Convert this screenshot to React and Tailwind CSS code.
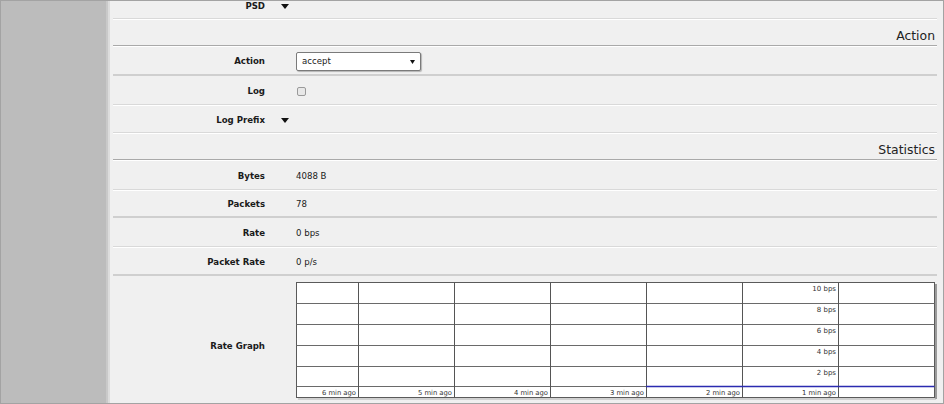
import React from "react";

const font = { fontFamily: '"DejaVu Sans", Verdana, sans-serif' };

const Caret = () => (
  <svg width="8" height="5" viewBox="0 0 8 5" className="block">
    <path d="M0 0 L8 0 L4 5 Z" fill="#111" />
  </svg>
);

const sepClass = {
  light: "border-b border-[#d9d9d9] shadow-[0_1px_0_#ffffff]",
  dark: "border-b border-[#a9a9a9] shadow-[0_1px_0_#ffffff]",
  thick: "border-b-2 border-[#cfcfcf]",
};

const Row = ({ label, sep = "light", h, children }) => (
  <div className={`mr-[2px] flex items-center pt-[3px] ${h} ${sepClass[sep]}`}>
    <div className="w-[153px] shrink-0 pr-[1px] text-right text-[8.6px] font-bold text-[#1a1a1a]">
      {label}
    </div>
    <div className="ml-[30px] flex items-center text-[8.6px] text-[#1a1a1a]">
      {children}
    </div>
  </div>
);

const Section = ({ title }) => (
  <div className={`mr-[2px] flex h-[27px] items-end justify-end pb-[3px] pr-[2px] ${sepClass.dark}`}>
    <span className="text-[12.4px] leading-none text-[#222]">{title}</span>
  </div>
);

const RateGraph = () => {
  const vx = [62, 158, 254, 350, 446, 542];
  const hy = [21, 42, 63, 84, 104];
  const yLabels = ["10 bps", "8 bps", "6 bps", "4 bps", "2 bps"];
  const xLabels = ["6 min ago", "5 min ago", "4 min ago", "3 min ago", "2 min ago", "1 min ago"];
  return (
    <svg width="642" height="118" viewBox="0 0 642 118" className="block" style={font}>
      <rect x="0.5" y="0.5" width="638" height="115" fill="#fff" stroke="#5a5a5a" />
      <line x1="640" y1="2" x2="640" y2="117" stroke="#9a9a9a" strokeWidth="2" />
      <line x1="2" y1="117" x2="640" y2="117" stroke="#b0b0b0" strokeWidth="1" />
      {hy.map((y) => (
        <line key={y} x1="0.5" y1={y + 0.5} x2="638.5" y2={y + 0.5} stroke="#6a6a6a" />
      ))}
      {vx.map((x) => (
        <line key={x} x1={x + 0.5} y1="0.5" x2={x + 0.5} y2="115.5" stroke="#555" />
      ))}
      <line x1="350" y1="104.5" x2="638.5" y2="104.5" stroke="#2b2bb0" strokeWidth="1.3" />
      {yLabels.map((t, i) => (
        <text key={t} x="540" y={9 + i * 21} textAnchor="end" fontSize="7" fill="#333">
          {t}
        </text>
      ))}
      {xLabels.map((t, i) => (
        <text key={t} x={vx[i] - 2} y="113" textAnchor="end" fontSize="6.8" fill="#333">
          {t}
        </text>
      ))}
    </svg>
  );
};

export default function App() {
  return (
    <div
      className="flex h-[404px] w-[944px] overflow-hidden border border-[#a3a3a3] bg-[#f0f0f0]"
      style={font}
    >
      <div className="w-[105px] shrink-0 bg-[#bcbcbc]" />
      <div className="w-[2px] shrink-0 bg-[#c9c9c9]" />
      <div className="w-[2px] shrink-0 bg-[#dcdcdc]" />
      <div className="min-w-0 flex-1 pl-[3px] pr-[4px]">
        <div className="mt-[-10px] flex flex-col">
          <Row label="PSD" sep="light" h="h-[28px]">
            <span className="ml-[-15px]">
              <Caret />
            </span>
          </Row>
          <Section title="Action" />
          <Row label="Action" sep="thick" h="h-[30px]">
            <div className="flex h-[19px] w-[125px] items-center justify-between rounded-[2px] border border-[#7a7a7a] bg-white pl-[5px] pr-[5px] shadow-[1px_1px_1px_rgba(0,0,0,0.25)]">
              <span>accept</span>
              <svg width="5" height="4" viewBox="0 0 5 4" className="block">
                <path d="M0 0 L5 0 L2.5 4 Z" fill="#111" />
              </svg>
            </div>
          </Row>
          <Row label="Log" sep="light" h="h-[29px]">
            <div className="ml-[1px] h-[9px] w-[9px] rounded-[2px] border border-[#9a9a9a] bg-[#e8e8e8]" />
          </Row>
          <Row label="Log Prefix" sep="light" h="h-[28px]">
            <span className="ml-[-15px]">
              <Caret />
            </span>
          </Row>
          <Section title="Statistics" />
          <Row label="Bytes" sep="light" h="h-[30px]">4088 B</Row>
          <Row label="Packets" sep="thick" h="h-[28px]">78</Row>
          <Row label="Rate" sep="light" h="h-[29px]">0 bps</Row>
          <Row label="Packet Rate" sep="thick" h="h-[29px]">0 p/s</Row>
          <div className="flex h-[140px] items-start pt-[6px]">
            <div className="flex h-[116px] w-[153px] shrink-0 items-center justify-end pr-[1px] pt-[12px] text-[8.6px] font-bold text-[#1a1a1a]">
              Rate Graph
            </div>
            <div className="ml-[30px]">
              <RateGraph />
            </div>
          </div>
        </div>
      </div>
    </div>
  );
}
